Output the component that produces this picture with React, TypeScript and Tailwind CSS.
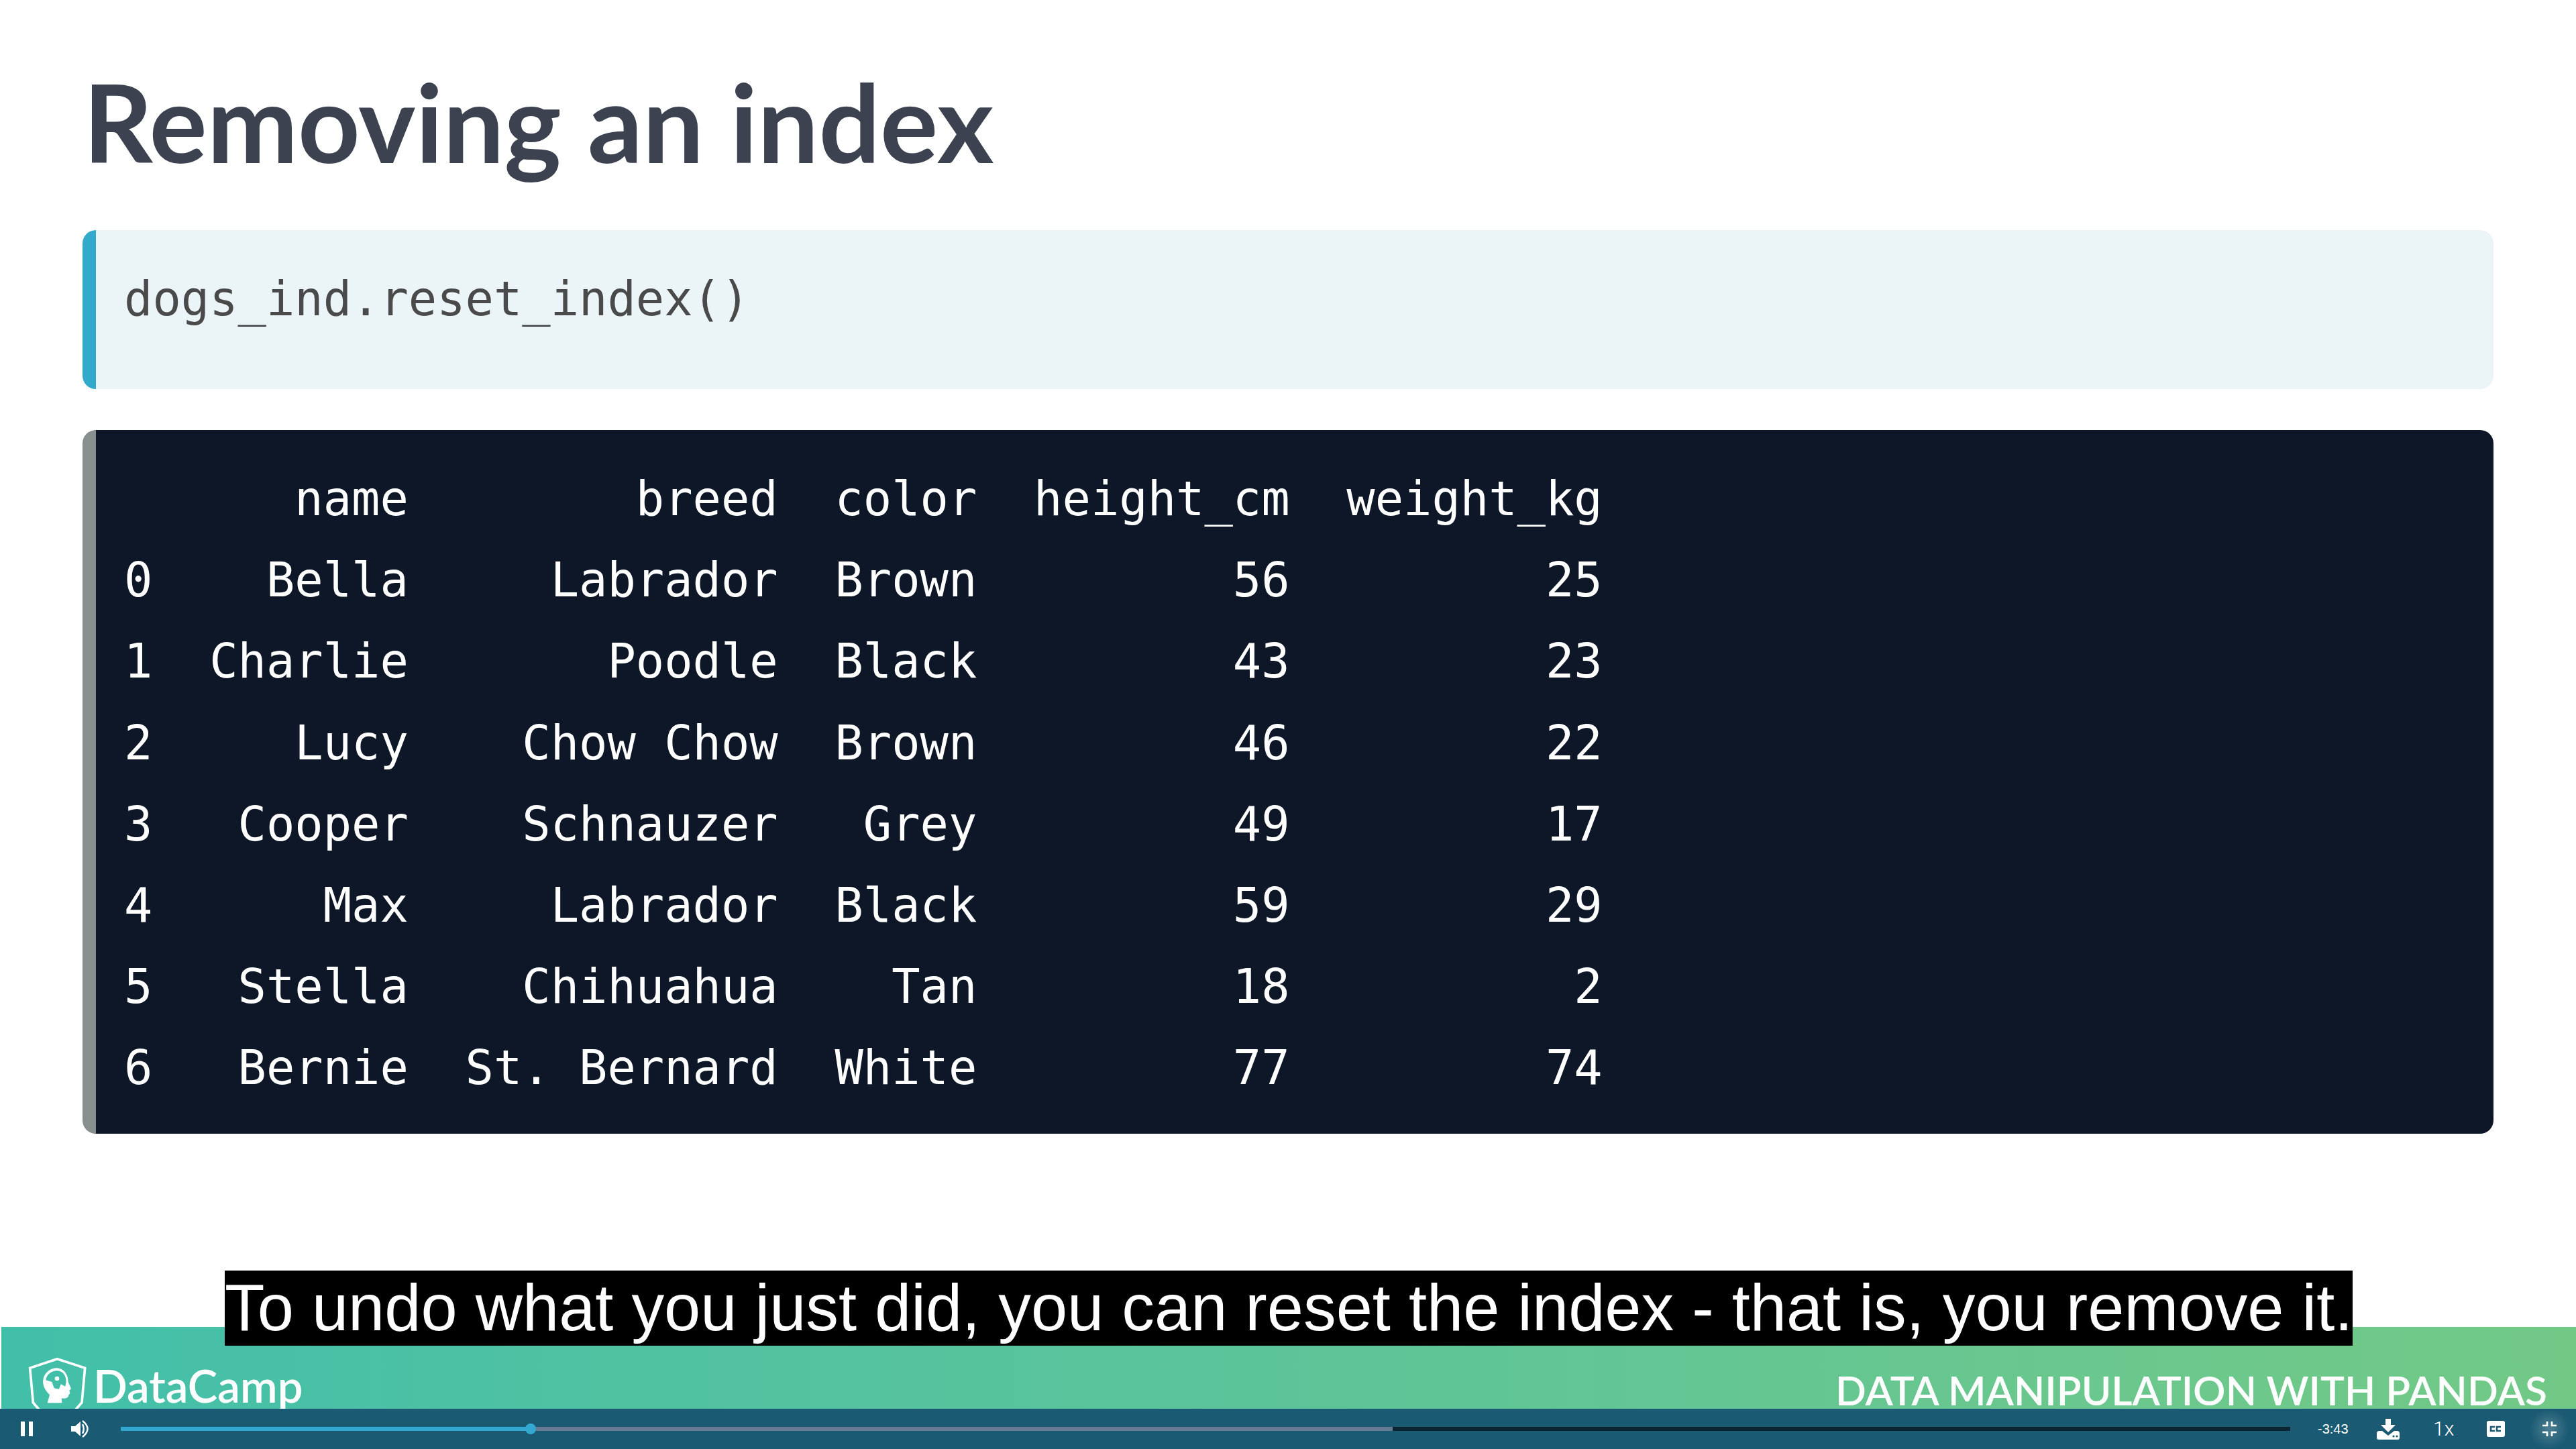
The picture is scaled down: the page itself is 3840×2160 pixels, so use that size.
const rows = [
  '      name        breed  color  height_cm  weight_kg',
  '0    Bella     Labrador  Brown         56         25',
  '1  Charlie       Poodle  Black         43         23',
  '2     Lucy    Chow Chow  Brown         46         22',
  '3   Cooper    Schnauzer   Grey         49         17',
  '4      Max     Labrador  Black         59         29',
  '5   Stella    Chihuahua    Tan         18          2',
  '6   Bernie  St. Bernard  White         77         74',
];

function Logo() {
  return (
    <svg viewBox="60 60 270 270" className="w-[90px] h-[90px] shrink-0" fill="none">
      <path d="M196 77 L320 118 L306 272 L262 322 H130 L88 272 L74 118 Z" stroke="#fff" strokeWidth="11" />
      <path d="M152 274 L162 238 C140 215 130 195 133 170 C137 140 165 118 195 118 C228 120 245 150 245 180 L258 210 L250 218 L253 232 L247 238 C246 252 235 256 215 253 L217 274 Z" fill="#fff" />
      <path d="M145 172 C147 148 170 130 196 130 C222 132 236 152 236 180 L232 200 L212 190 L204 212 L182 208 L172 180 Z" fill="#41bfa8" />
      <circle cx="195" cy="165" r="10" fill="#fff" />
    </svg>
  );
}

function Controls() {
  return (
    <div className="h-[60px] bg-[#1a5a72] flex items-center text-white font-['Liberation_Sans',sans-serif]">
      <svg viewBox="0 0 18 22" className="ml-[31px] w-[18px] h-[22px]" fill="#fff">
        <rect x="0" y="0" width="6" height="22" />
        <rect x="12" y="0" width="6" height="22" />
      </svg>
      <svg viewBox="0 0 27 26" className="ml-[57px] w-[27px] h-[26px]" fill="none">
        <path d="M0 9 H6 L14 2 V24 L6 17 H0 Z" fill="#fff" />
        <path d="M17 6 Q20.5 13 17 20" stroke="#fff" strokeWidth="2.5" />
        <path d="M17 1 Q32 13 17 25" stroke="#fff" strokeWidth="2.5" />
      </svg>
      <div className="relative ml-[47px] w-[3234px] h-[6px] bg-[#0a2432]">
        <div className="absolute inset-y-0 left-0 w-[1896px] bg-[#667b93]" />
        <div className="absolute inset-y-0 left-0 w-[611px] bg-[#33a8d0]" />
        <div className="absolute left-[603px] top-[-5px] w-[16px] h-[16px] rounded-full bg-[#33a8d0]" />
      </div>
      <span className="ml-[41px] w-[44px] text-[20px] whitespace-nowrap">-3:43</span>
      <svg viewBox="0 0 34 31" className="ml-[44px] w-[34px] h-[31px]" fill="#fff">
        <path d="M13 0 H21 V9 H28 L17 20 L6 9 H13 Z" />
        <path d="M0 22 Q0 18 4 18 H8 L17 25 L26 18 H30 Q34 18 34 22 V28 Q34 31 31 31 H3 Q0 31 0 28 Z" />
        <circle cx="25" cy="26" r="1.6" fill="#1a5a72" />
        <circle cx="30" cy="26" r="1.6" fill="#1a5a72" />
      </svg>
      <span className="ml-[50px] w-[32px] text-[30px] font-light leading-none whitespace-nowrap font-['Roboto',sans-serif]">1x</span>
      <svg viewBox="0 0 27 24" className="ml-[48px] w-[27px] h-[24px]">
        <rect width="27" height="24" rx="3" fill="#fff" />
        <path d="M12 9 H6 V15 H12 M21 9 H15 V15 H21" fill="none" stroke="#1a5a72" strokeWidth="2.6" />
      </svg>
      <div className="ml-[35px] w-[62px] h-[60px] flex items-center justify-center bg-[radial-gradient(circle,rgba(255,255,255,0.22),rgba(255,255,255,0)_70%)]">
        <svg viewBox="0 0 21 22" className="w-[21px] h-[22px]" fill="none" stroke="#fff" strokeWidth="2.7">
          <path d="M7 0 V6 H0 M14 0 V6 H21 M7 22 V16 H0 M14 22 V16 H21" />
        </svg>
      </div>
    </div>
  );
}

export default function App() {
  return (
    <div className="relative w-[3840px] h-[2160px] bg-white flex flex-col overflow-hidden">
      <h1 className="ml-[124px] mt-[81px] h-[262px] text-[161.5px] leading-[200px] font-bold text-[#3d4251] font-['Lato',sans-serif]">
        Removing an index
      </h1>

      <div className="mx-[123px] h-[237px] rounded-[20px] border-l-[20px] border-[#33aacc] bg-[#ebf4f7] pl-[42px] pt-[58px]">
        <pre className="font-['DejaVu_Sans_Mono',monospace] text-[70.4px] leading-[90px] text-[#4a4a4a]">dogs_ind.reset_index()</pre>
      </div>

      <div className="mx-[123px] mt-[61px] h-[1049px] rounded-[20px] border-l-[20px] border-[#87908f] bg-[#0d1727] pl-[42px] pt-[43px]">
        <pre className="font-['DejaVu_Sans_Mono',monospace] text-[70.4px] leading-[121.2px] text-white">
          {rows.join('\n')}
        </pre>
      </div>

      <div className="mt-auto">
        <div className="ml-[2px] h-[122px] bg-linear-to-r from-[#42bfa9] to-[#72c986] flex justify-between items-end overflow-hidden">
          <div className="flex items-start pl-[38px] self-start mt-[42px]">
            <Logo />
            <span className="ml-[9px] mt-[15px] text-[67px] leading-[60px] font-semibold text-white font-['Lato',sans-serif]">DataCamp</span>
          </div>
          <span className="mr-[43px] pb-[3px] text-[60.4px] leading-[50px] font-semibold text-white font-['Lato',sans-serif] whitespace-nowrap">DATA MANIPULATION WITH PANDAS</span>
        </div>
        <Controls />
      </div>

      <div className="absolute left-[335px] top-[1894px] h-[112px] bg-black text-white text-[97.4px] leading-[112px] font-['Liberation_Sans',sans-serif] whitespace-nowrap">
        To undo what you just did, you can reset the index - that is, you remove it.
      </div>
    </div>
  );
}
